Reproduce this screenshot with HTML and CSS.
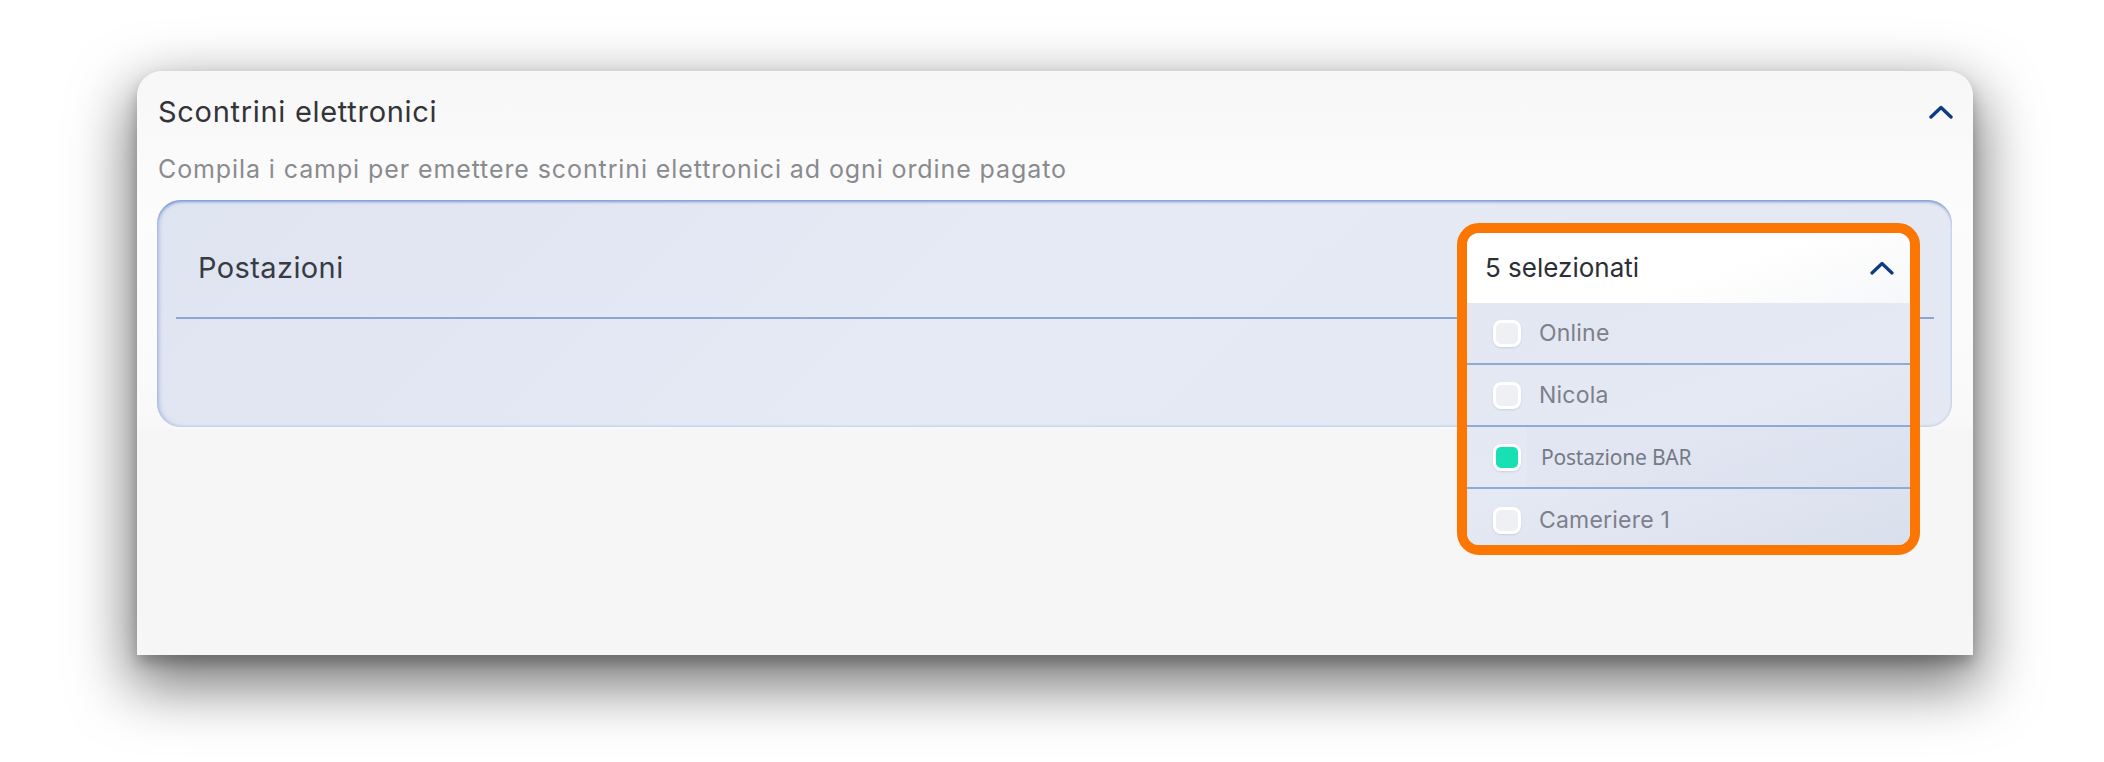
FILE: index.html
```html
<!DOCTYPE html>
<html lang="it">
<head>
<meta charset="utf-8">
<title>Scontrini elettronici</title>
<link rel="stylesheet" href="styles.css">
</head>
<body>
<div class="stage">
  <section class="card">
    <div class="card-top">
      <header class="card-head">
        <h2 class="card-title">Scontrini elettronici</h2>
        <svg class="chev chev-card" viewBox="0 0 24 14" width="24" height="14" aria-hidden="true"><path d="M2 12 L12 2.5 L22 12"/></svg>
      </header>
      <p class="card-sub">Compila i campi per emettere scontrini elettronici ad ogni ordine pagato</p>
      <div class="panel">
        <div class="panel-row">
          <span class="panel-label">Postazioni</span>
        </div>
        <div class="panel-rule"></div>
        <div class="dropdown">
          <div class="dd-inner">
            <div class="dd-head">
              <span class="dd-value">5 selezionati</span>
              <svg class="chev chev-dd" viewBox="0 0 24 14" width="24" height="14" aria-hidden="true"><path d="M2 12 L12 2.5 L22 12"/></svg>
            </div>
            <ul class="dd-list">
              <li class="dd-item"><span class="cb"></span><span class="dd-text">Online</span></li>
              <li class="dd-item"><span class="cb"></span><span class="dd-text">Nicola</span></li>
              <li class="dd-item dd-item-on"><span class="cb cb-on"></span><span class="dd-text dd-text-alt">Postazione BAR</span></li>
              <li class="dd-item dd-item-last"><span class="cb"></span><span class="dd-text">Cameriere 1</span></li>
            </ul>
          </div>
        </div>
      </div>
    </div>
    <div class="card-bottom"></div>
  </section>
</div>
</body>
</html>
```

FILE: styles.css
```css
* { box-sizing: border-box; }

html, body {
  margin: 0;
  padding: 0;
  background: #ffffff;
}

body {
  font-family: "Inter", "Noto Sans", sans-serif;
  width: 2104px;
  height: 762px;
  overflow: hidden;
}

.stage {
  padding: 71px 0 0 137px;
}

.card {
  width: 1836px;
  height: 584px;
  border-radius: 25px 25px 0 0;
  background: #f6f6f6;
  box-shadow: 0 24px 60px 6px rgba(0, 0, 0, 0.55), 0 8px 14px rgba(0, 0, 0, 0.22);
  display: flex;
  flex-direction: column;
}

.card-top {
  border-radius: 25px 25px 0 0;
  background: linear-gradient(180deg, #f7f7f7 0%, #fcfcfc 40%, #fbfbfb 70%, #f8f8f8 100%);
  padding: 0 21px 2px 20px;
}

.card-head {
  height: 82px;
  display: flex;
  align-items: center;
  justify-content: space-between;
  padding-left: 1px;
}

.card-title {
  margin: 0;
  font-size: 29px;
  font-weight: 400;
  letter-spacing: 0.7px;
  color: #333438;
  line-height: 36px;
}

.chev {
  display: block;
  fill: none;
  stroke-linecap: round;
  stroke-linejoin: round;
}

.chev-card {
  stroke: #0c3c80;
  stroke-width: 3.4;
  margin-right: -1px;
}

.card-sub {
  margin: 0;
  padding-left: 1px;
  height: 32px;
  line-height: 32px;
  font-size: 25px;
  letter-spacing: 0.9px;
  color: #8a8b8f;
}

.panel {
  position: relative;
  margin-top: 15px;
  height: 227px;
  border-radius: 24px;
  background: linear-gradient(135deg, #dfe4f1 0%, #e6eaf5 45%, #e3e8f3 100%);
  box-shadow: inset 0 3px 3px -1px rgba(70, 115, 190, 0.6), inset 3px 0 4px -1px rgba(70, 115, 190, 0.35), inset -1px -1px 2px rgba(90, 125, 190, 0.12);
}

.panel-row {
  height: 117px;
  padding: 18px 0 0 41px;
  display: flex;
  align-items: center;
}

.panel-label {
  font-size: 29px;
  letter-spacing: 0.4px;
  color: #383b43;
  line-height: 36px;
}

.panel-rule {
  height: 2px;
  margin: 0 18px 0 19px;
  background: #8aa6d2;
}

.dropdown {
  position: absolute;
  left: 1300px;
  top: 23px;
  width: 463px;
  height: 332px;
  border: 10px solid #fb7603;
  border-radius: 22px;
  background: #e1e6f1;
}

.dd-inner {
  height: 100%;
  border-radius: 12px;
  overflow: hidden;
  display: flex;
  flex-direction: column;
}

.dd-head {
  height: 70px;
  flex: none;
  display: flex;
  align-items: center;
  justify-content: space-between;
  padding: 0 16px 0 18px;
  background: linear-gradient(160deg, #ffffff 0%, #ffffff 55%, #f6f7f9 100%);
}

.dd-value {
  font-size: 26px;
  color: #2c2f36;
  line-height: 34px;
}

.chev-dd {
  stroke: #0c3c80;
  stroke-width: 3.2;
}

.dd-list {
  list-style: none;
  margin: 0;
  padding: 0;
  flex: 1;
  display: flex;
  flex-direction: column;
  background: linear-gradient(160deg, #e2e7f2 0%, #e5e9f4 50%, #d9dfec 100%);
}

.dd-item {
  height: 62px;
  flex: none;
  display: flex;
  align-items: center;
  padding-left: 26px;
  border-bottom: 2px solid #8eaad5;
}

.dd-item-last {
  border-bottom: 0;
}

.cb {
  width: 28px;
  height: 27px;
  flex: none;
  border-radius: 8px;
  border: 3px solid #ffffff;
  background: #eff0f3;
  box-shadow: 0 1px 2px rgba(60, 80, 120, 0.15);
}

.cb-on {
  background: #17e0b2;
}

.dd-text {
  margin-left: 18px;
  font-size: 23px;
  letter-spacing: 0.2px;
  color: #7c808b;
  line-height: 30px;
}

.dd-item-on {
  align-items: stretch;
}

.dd-item-on .cb {
  align-self: center;
}

.dd-text-alt {
  flex: 1;
  display: flex;
  align-items: center;
  margin-left: 6px;
  padding-left: 14px;
  font-family: "Noto Sans", "Open Sans", sans-serif;
  font-size: 21px;
  letter-spacing: -0.2px;
  color: #767a85;
  background: rgba(205, 213, 232, 0.15);
}

.card-bottom {
  flex: 1;
  background: #f6f6f6;
}
```
